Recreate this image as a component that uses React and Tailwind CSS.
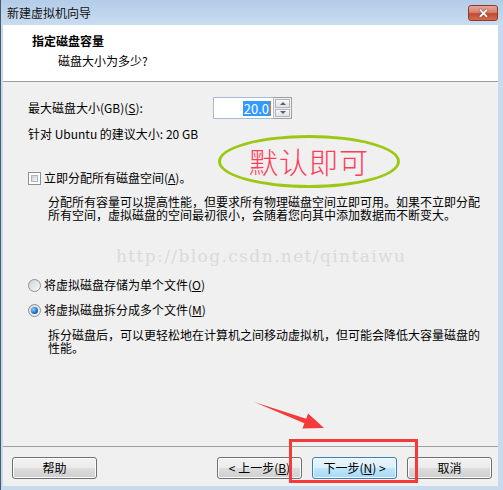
import React from 'react';

const cjk = "font-['Noto_Sans_CJK_SC',sans-serif]";

const WinButton = ({ children, primary, className = '' }) => (
  <div
    className={`w-[85px] h-[22px] rounded-[3px] border flex items-center justify-center text-[12px] text-black ${
      primary
        ? 'border-[#3c7fb1] bg-[linear-gradient(#eaf6fd_0%,#d9f0fc_50%,#bee6fd_51%,#a7d9f5_100%)] shadow-[inset_0_0_0_1px_#f2fbff]'
        : 'border-[#707070] bg-[linear-gradient(#f2f2f2_0%,#ebebeb_50%,#dddddd_51%,#cfcfcf_100%)] shadow-[inset_0_0_0_1px_#fcfcfc]'
    } ${className}`}
  >
    {children}
  </div>
);

const Checkbox = () => (
  <div className="w-[13px] h-[13px] border border-[#8e8f8f] bg-white p-[2px] shrink-0">
    <div className="w-full h-full bg-[linear-gradient(135deg,#cbcfd5,#f6f6f6)] border border-[#aeb3b9]" />
  </div>
);

const Radio = ({ checked }) => (
  <div className="w-[13px] h-[13px] rounded-full border border-[#8e8f8f] bg-[linear-gradient(135deg,#d0d3d8,#fafafa)] flex items-center justify-center shrink-0">
    {checked && (
      <div className="w-[7px] h-[7px] rounded-full bg-[radial-gradient(circle_at_35%_35%,#8fd0ff,#1a6ac8_60%,#0b3f8c)]" />
    )}
  </div>
);

export default function App() {
  return (
    <div className={`relative w-[503px] h-[490px] overflow-hidden flex flex-col bg-[#c7daee] border-l border-[#4a5a6e] ${cjk}`}>
      {/* title bar */}
      <div className="h-[25px] shrink-0 flex items-center justify-between pl-[6px] pr-[5px] bg-[linear-gradient(#b3cce8,#c9dcf0)]">
        <span className="text-[12px] text-[#111]">新建虚拟机向导</span>
        <div className="w-[30px] h-[16px] rounded-[3px] border border-[#8b3a2e] bg-[linear-gradient(#e8a597_0%,#d7826f_45%,#c24a31_55%,#d46c4e_100%)] flex items-center justify-center text-white text-[13px] font-bold leading-none [text-shadow:0_0_1px_#5a1a10,0_0_1px_#5a1a10]">
          ✕
        </div>
      </div>

      {/* client area */}
      <div className="flex-1 flex flex-col ml-[2px] mr-[5px] mb-[4px] bg-[#f0f0f0]">
        {/* header */}
        <div className="h-[57px] shrink-0 bg-white border-b border-[#a0a0a0] pt-[8px] pl-[29px]">
          <div className="text-[12px] font-bold leading-[16px] text-black">指定磁盘容量</div>
          <div className="text-[12px] leading-[16px] text-black mt-[4px] pl-[26px]">磁盘大小为多少?</div>
        </div>

        {/* body */}
        <div className="flex-1 flex flex-col pl-[25px] text-[12px] text-black">
          <div className="mt-[15px] h-[22px] flex items-center">
            <span className="w-[185px]">
              最大磁盘大小(GB)(<span className="underline">S</span>):
            </span>
            <div className="flex h-[22px]">
              <div className="w-[61px] h-[22px] border border-[#a4bcd6] bg-white flex items-center justify-end pr-[2px]">
                <span className="bg-[#3399ff] text-white text-[13px] leading-[15px] px-[1px]">20.0</span>
                <span className="w-[1px] h-[15px] bg-[#e07a10]" />
              </div>
              <div className="w-[18px] h-[22px] border border-[#a0a0a0] border-l-0 flex flex-col gap-[1px] p-[1px] bg-[#f0f0f0]">
                <div className="flex-1 border border-[#b5b5b5] bg-[linear-gradient(#f7f7f7,#e2e2e2)] flex items-center justify-center">
                  <div className="w-0 h-0 border-l-[3px] border-r-[3px] border-b-[3px] border-l-transparent border-r-transparent border-b-[#4d6185]" />
                </div>
                <div className="flex-1 border border-[#b5b5b5] bg-[linear-gradient(#f7f7f7,#e2e2e2)] flex items-center justify-center">
                  <div className="w-0 h-0 border-l-[3px] border-r-[3px] border-t-[3px] border-l-transparent border-r-transparent border-t-[#4d6185]" />
                </div>
              </div>
            </div>
          </div>

          <div className="mt-[7px] h-[16px] leading-[16px]">针对 Ubuntu 的建议大小: 20 GB</div>

          <div className="mt-[28px] h-[16px] flex items-center gap-[3px]">
            <Checkbox />
            <span className="leading-[16px]">
              立即分配所有磁盘空间(<span className="underline">A</span>)。
            </span>
          </div>

          <div className="mt-[9px] pl-[20px] leading-[13px] whitespace-nowrap">
            <div>分配所有容量可以提高性能，但要求所有物理磁盘空间立即可用。如果不立即分配</div>
            <div>所有空间，虚拟磁盘的空间最初很小，会随着您向其中添加数据而不断变大。</div>
          </div>

          <div className="mt-[56px] h-[16px] flex items-center gap-[3px]">
            <Radio />
            <span className="leading-[16px]">
              将虚拟磁盘存储为单个文件(<span className="underline">O</span>)
            </span>
          </div>

          <div className="mt-[9px] h-[16px] flex items-center gap-[3px]">
            <Radio checked />
            <span className="leading-[16px]">
              将虚拟磁盘拆分成多个文件(<span className="underline">M</span>)
            </span>
          </div>

          <div className="mt-[10px] pl-[20px] leading-[13px] whitespace-nowrap">
            <div>拆分磁盘后，可以更轻松地在计算机之间移动虚拟机，但可能会降低大容量磁盘的</div>
            <div>性能。</div>
          </div>
        </div>

        {/* footer */}
        <div className="h-[40px] shrink-0 border-t border-[#a0a0a0] flex items-start pt-[10px] pl-[9px] pr-[6px]">
          <WinButton>帮助</WinButton>
          <div className="flex-1" />
          <div className="flex gap-[10px]">
            <WinButton>&lt; 上一步(<span className="underline">B</span>)</WinButton>
            <WinButton primary>下一步(<span className="underline">N</span>) &gt;</WinButton>
            <WinButton>取消</WinButton>
          </div>
        </div>
      </div>

      {/* annotations over the screenshot */}
      <div className="absolute left-[115px] top-[244px] font-['DejaVu_Serif',serif] text-[17px] tracking-[1.4px] text-[#dadada] whitespace-nowrap">
        http://blog.csdn.net/qintaiwu
      </div>

      <div className="absolute left-[217px] top-[135px] w-[182px] h-[53px] rounded-[50%] border-[3px] border-[#9cc813] flex items-center justify-center">
        <span className="text-[29px] font-light leading-none text-[#ff3d5a] tracking-[1px]">默认即可</span>
      </div>

      <div className="absolute left-[288px] top-[439px] w-[129px] h-[44px] border-[3px] border-[#f43a3a]" />

      <svg className="absolute left-0 top-0" width="503" height="490" viewBox="0 0 503 490">
        <polygon
          points="253,402 305.2,418.7 307.1,413.5 323,428 301.5,428.5 303.4,423.3"
          fill="#f43a3a"
        />
      </svg>
    </div>
  );
}
